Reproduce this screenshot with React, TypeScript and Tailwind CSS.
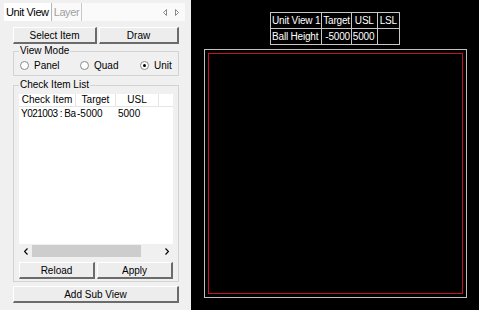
import React from "react";

const font = { fontFamily: '"Liberation Sans", Tahoma, Arial, sans-serif' };

function Btn({ children, className = "" }: { children: React.ReactNode; className?: string }) {
  return (
    <div
      className={
        "h-[17px] flex items-center justify-center text-[10px] text-black bg-[#ededed] border-t border-l border-t-white border-l-white border-r-2 border-b-2 border-r-[#6b6b6b] border-b-[#6b6b6b] " +
        className
      }
    >
      {children}
    </div>
  );
}

function Radio({ label, checked }: { label: string; checked?: boolean }) {
  return (
    <div className="flex items-center gap-[5px] text-[10px] text-black">
      <div className="w-[9px] h-[9px] rounded-full border border-[#8a8a8a] bg-white flex items-center justify-center">
        {checked && <div className="w-[3px] h-[3px] rounded-full bg-black" />}
      </div>
      <span>{label}</span>
    </div>
  );
}

export default function App() {
  return (
    <div className="w-[479px] h-[310px] flex overflow-hidden" style={font}>
      {/* Left panel */}
      <div className="w-[191px] h-full bg-[#f0f0f0] flex flex-col">
        <div className="mt-[3px] ml-[4px] mr-[6px] h-[18px] bg-[#fafafa] flex items-center text-[11px] tracking-[-0.4px]">
          <div className="h-full px-[2px] bg-white text-black flex items-center border-r border-[#b5b5b5]">Unit View</div>
          <div className="h-full px-[2px] text-[#a0a0a0] flex items-center border-r border-[#c8c8c8]">Layer</div>
          <div className="flex-1" />
          <div className="flex items-center gap-[8px] pr-[6px] text-[#8a8a8a]">
            <svg width="4" height="7" viewBox="0 0 4 7"><path d="M3.5 0.5 L0.5 3.5 L3.5 6.5 Z" fill="none" stroke="#8a8a8a" strokeWidth="1" /></svg>
            <svg width="4" height="7" viewBox="0 0 4 7"><path d="M0.5 0.5 L3.5 3.5 L0.5 6.5 Z" fill="none" stroke="#8a8a8a" strokeWidth="1" /></svg>
          </div>
        </div>

        <div className="mt-[6px] ml-[13px] mr-[12px] flex gap-[2px]">
          <Btn className="w-[84px]">Select Item</Btn>
          <Btn className="flex-1">Draw</Btn>
        </div>

        <div className="mt-[7px] ml-[13px] mr-[12px] h-[25px] border border-[#d3d3d3] relative">
          <span className="absolute -top-[7px] left-[5px] px-[1px] bg-[#f0f0f0] text-[10px] text-black leading-[12px]">View Mode</span>
          <div className="flex items-center h-full pt-[3px] pl-[6px]">
            <div className="w-[60px]"><Radio label="Panel" /></div>
            <div className="w-[60px]"><Radio label="Quad" /></div>
            <Radio label="Unit" checked />
          </div>
        </div>

        <div className="mt-[9px] ml-[13px] mr-[12px] h-[197px] border border-[#d3d3d3] relative flex flex-col px-[5px] pt-[8px]">
          <span className="absolute -top-[7px] left-[5px] px-[1px] bg-[#f0f0f0] text-[10px] text-black leading-[12px]">Check Item List</span>
          <div className="h-[164px] bg-white flex flex-col text-[10px] text-black">
            <div className="h-[13px] flex bg-white border-b border-[#e5e5e5]">
              <div className="w-[57px] text-center border-r border-[#e5e5e5] leading-[12px]">Check Item</div>
              <div className="w-[40px] text-center border-r border-[#e5e5e5] leading-[12px]">Target</div>
              <div className="w-[43px] text-center border-r border-[#e5e5e5] leading-[12px]">USL</div>
              <div className="flex-1" />
            </div>
            <div className="h-[13px] flex items-center">
              <div className="w-[57px] pl-[2px] whitespace-nowrap overflow-hidden tracking-[-0.5px]">Y021003 : Ba</div>
              <div className="w-[40px] pl-[1px]">-5000</div>
              <div className="w-[43px] pl-[2px]">5000</div>
            </div>
            <div className="flex-1" />
            <div className="h-[14px] flex items-center bg-[#f0f0f0]">
              <div className="w-[13px] flex items-center justify-center">
                <svg width="4" height="7" viewBox="0 0 4 7"><path d="M3.5 0.5 L0.5 3.5 L3.5 6.5" fill="none" stroke="#000" strokeWidth="1.2" /></svg>
              </div>
              <div className="w-[109px] h-[12px] bg-[#cdcdcd]" />
              <div className="flex-1" />
              <div className="w-[13px] flex items-center justify-center">
                <svg width="4" height="7" viewBox="0 0 4 7"><path d="M0.5 0.5 L3.5 3.5 L0.5 6.5" fill="none" stroke="#000" strokeWidth="1.2" /></svg>
              </div>
            </div>
          </div>
          <div className="mt-[4px] flex gap-[2px]">
            <Btn className="flex-1">Reload</Btn>
            <Btn className="flex-1">Apply</Btn>
          </div>
        </div>

        <div className="mt-[4px] ml-[13px] mr-[12px]">
          <Btn>Add Sub View</Btn>
        </div>
      </div>

      {/* Right canvas */}
      <div className="flex-1 h-full bg-black flex flex-col items-center">
        <table className="mt-[12px] border-collapse text-[10px] text-white tracking-[-0.2px]">
          <tbody>
            <tr className="h-[16px]">
              <td className="border border-[#c8c8c8] px-[1px] leading-[14px] whitespace-nowrap">Unit View 1</td>
              <td className="border border-[#c8c8c8] px-[1px] leading-[14px]">Target</td>
              <td className="border border-[#c8c8c8] px-[3px] leading-[14px]">USL</td>
              <td className="border border-[#c8c8c8] px-[2px] leading-[14px]">LSL</td>
            </tr>
            <tr className="h-[16px]">
              <td className="border border-[#c8c8c8] px-[1px] leading-[14px] whitespace-nowrap">Ball Height</td>
              <td className="border border-[#c8c8c8] px-[1px] leading-[14px] text-right">-5000</td>
              <td className="border border-[#c8c8c8] px-[1px] leading-[14px]">5000</td>
              <td className="border border-[#c8c8c8] px-[2px] leading-[14px]"></td>
            </tr>
          </tbody>
        </table>
        <div className="mt-[4px] w-[263px] h-[249px] border border-[#c0c0c0] p-[3px]">
          <div className="w-full h-full border border-[#c8102e]" />
        </div>
      </div>
    </div>
  );
}
